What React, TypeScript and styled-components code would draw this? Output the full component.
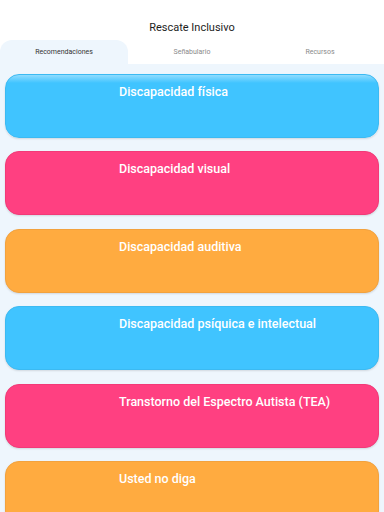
import React from 'react';
import styled, { createGlobalStyle } from 'styled-components';

const GlobalStyle = createGlobalStyle`
  html, body {
    margin: 0;
    padding: 0;
    background: #eef6fd;
    font-family: Roboto, "Noto Sans", sans-serif;
  }
  #root {
    height: 512px;
    overflow: hidden;
  }
`;

interface CardProps {
  color: string;
  edge: string;
  glow?: boolean;
}

interface TabProps {
  active?: boolean;
}

const Page = styled.div`
  display: flex;
  flex-direction: column;
  height: 512px;
`;

const Header = styled.header`
  flex-shrink: 0;
  background: #ffffff;
  height: 40px;
  display: flex;
  align-items: flex-end;
  justify-content: center;
`;

const Title = styled.h1`
  margin: 0 0 6px;
  font-size: 11px;
  font-weight: 400;
  color: #1d1d1d;
`;

const TabBar = styled.nav`
  flex-shrink: 0;
  display: grid;
  grid-template-columns: repeat(3, 1fr);
  height: 24px;
  background: #ffffff;
`;

const Tab = styled.div<TabProps>`
  display: flex;
  align-items: center;
  justify-content: center;
  font-size: 7px;
  color: ${({ active }) => (active ? '#333333' : '#8a8a8a')};
  background: ${({ active }) => (active ? '#eef6fd' : '#ffffff')};
  border-radius: ${({ active }) => (active ? '12px 12px 0 0' : '0')};
  padding-bottom: 1px;
`;

const List = styled.main`
  display: flex;
  flex-direction: column;
  gap: 13.4px;
  padding: 10px 5px 0;
`;

const Card = styled.div<CardProps>`
  height: 64px;
  flex-shrink: 0;
  box-sizing: border-box;
  border-radius: 14px;
  border: 1px solid ${({ edge }) => edge};
  background: ${({ color, glow }) =>
    glow ? `linear-gradient(to bottom, #8fdcff 0px, ${color} 8px, ${color} 100%)` : color};
  box-shadow: 0 1px 2px rgba(0, 0, 0, 0.12);
  padding: 6px 0 0 113px;
`;

const CardTitle = styled.span`
  color: #ffffff;
  font-size: 12.5px;
  font-weight: 500;
`;

const blue = { color: '#40c4ff', edge: '#3cbaf2' };
const pink = { color: '#ff4081', edge: '#f23a78' };
const orange = { color: '#ffab40', edge: '#f2a23e' };

const sections = [
  { title: 'Discapacidad física', ...blue },
  { title: 'Discapacidad visual', ...pink },
  { title: 'Discapacidad auditiva', ...orange },
  { title: 'Discapacidad psíquica e intelectual', ...blue },
  { title: 'Transtorno del Espectro Autista (TEA)', ...pink },
  { title: 'Usted no diga', ...orange },
];

const tabs = ['Recomendaciones', 'Señabulario', 'Recursos'];

export default function App() {
  return (
    <Page>
      <GlobalStyle />
      <Header>
        <Title>Rescate Inclusivo</Title>
      </Header>
      <TabBar>
        {tabs.map((tab, i) => (
          <Tab key={tab} active={i === 0}>{tab}</Tab>
        ))}
      </TabBar>
      <List>
        {sections.map((s, i) => (
          <Card key={s.title} color={s.color} edge={s.edge} glow={i === 0}>
            <CardTitle>{s.title}</CardTitle>
          </Card>
        ))}
      </List>
    </Page>
  );
}
